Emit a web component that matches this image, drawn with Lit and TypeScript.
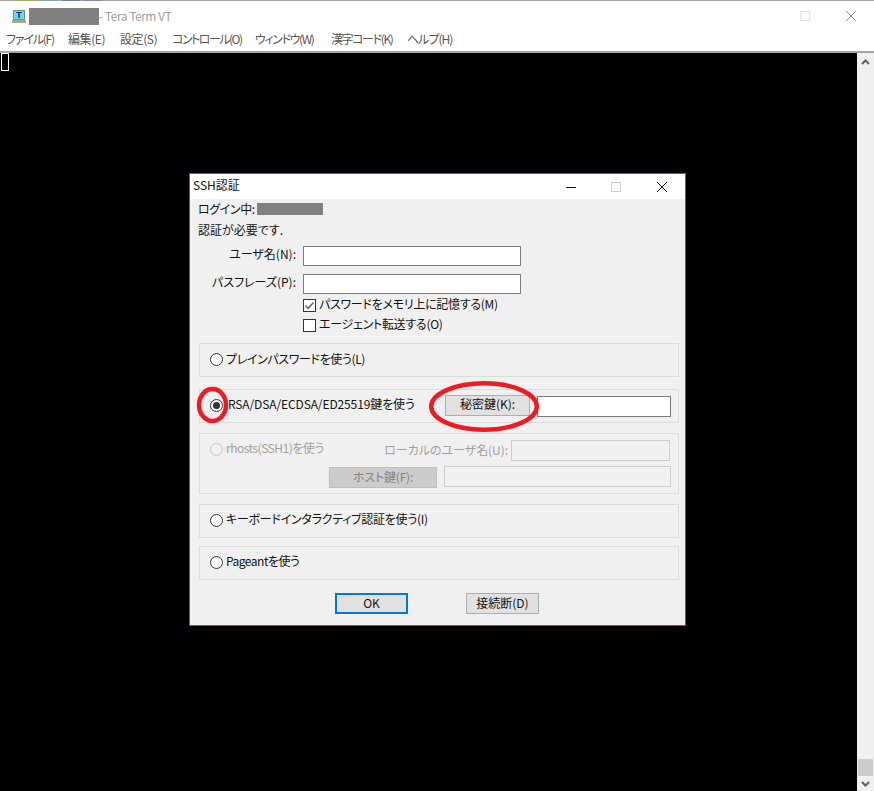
import { LitElement, html, css, svg } from "lit";
import { customElement } from "lit/decorators.js";

@customElement("app-root")
export class AppRoot extends LitElement {
  static styles = css`
    :host {
      display: block;
      position: relative;
      width: 874px;
      height: 791px;
      overflow: hidden;
      background: #000;
      font-family: "Noto Sans CJK JP", "Noto Sans", sans-serif;
      font-size: 12px;
      font-feature-settings: "palt";
      color: #111;
    }
    .tx { display: block; line-height: 16px; margin-bottom: 4px; white-space: nowrap; }
    .tx1 { display: block; line-height: 16px; margin-bottom: 2px; white-space: nowrap; }
    .tx0 { display: block; line-height: 16px; white-space: nowrap; }
    .win { display: flex; flex-direction: column; height: 100%; }
    .strip {
      height: 1px;
      background: linear-gradient(90deg,
        #a3a29b 0 17px, #9fae4a 17px 35px, #a3a29b 35px 40px, #7fa6a8 40px 58px,
        #a3a29b 58px 62px, #6f86a0 62px 80px, #a3a29b 80px 83px, #8d86a6 83px 102px, #a3a29b 102px);
    }
    .title { height: 30px; background: #fff; display: flex; align-items: center; padding-left: 12px; }
    .appicon { width: 14px; height: 15px; margin-right: 3px; }
    .mask { background: #808080; display: block; }
    .mask.t { width: 70px; height: 17px; }
    .apptitle { color: #9b9b9b; font-size: 11.5px; letter-spacing: -0.25px; white-space: pre; }
    .wctl { margin-left: auto; display: flex; align-items: center; gap: 36px; padding-right: 18px; }
    .menu { height: 20px; background: #fff; display: flex; align-items: center; padding-left: 6px; color: #555; }
    .menu .m1 { width: 62px; letter-spacing: -1.2px; }
    .menu .m2 { width: 52px; letter-spacing: -0.4px; }
    .menu .m4 { width: 83px; letter-spacing: -1.5px; }
    .menu .m5 { width: 76px; letter-spacing: -1.4px; }
    .menu .m6 { width: 76px; letter-spacing: -1.4px; }
    .menu .m7 { letter-spacing: -1px; }
    .rule { height: 2px; background: #a5a5a5; flex: none; }
    .main { flex: 1; display: flex; min-height: 0; }
    .term { flex: 1; background: #000; padding: 0 0 0 1px; }
    .cursor { width: 8px; height: 18px; border: 1px solid #fff; box-sizing: border-box; }
    .sb { width: 17px; background: #f0f0f0; display: flex; flex-direction: column; align-items: center; }
    .sb svg { flex: none; }
    .sb .arrowup { margin-top: 6px; }
    .sb .fill { flex: 1; }
    .sb .thumb { width: 15px; height: 17px; background: #cdcdcd; }
    .sb .arrowdn { margin: 5px 0 4px; }

    .dlg {
      position: absolute;
      left: 189px;
      top: 173px;
      width: 497px;
      height: 453px;
      box-sizing: border-box;
      border: 1px solid #0078d7;
      background: #f0f0f0;
      display: flex;
      flex-direction: column;
    }
    .dtitle { height: 25px; background: #fff; display: flex; align-items: center; padding-left: 3px; color: #111; flex: none; }
    .dctl { margin-left: auto; display: flex; align-items: center; gap: 35px; padding-right: 18px; }
    .dctl .cl { margin-left: 1px; }
    .dbody { display: flex; flex-direction: column; padding: 0 6px 0 8px; }
    .line { height: 20px; display: flex; align-items: center; }
    .line + .line { margin-top: 2px; }
    .login { letter-spacing: -0.4px; }
    .mask.h { width: 66px; height: 12px; margin-left: 2px; }
    .form {
      display: grid;
      grid-template-columns: 98px 218px;
      column-gap: 7px;
      grid-auto-rows: 20px;
      row-gap: 8px;
      margin-top: 5px;
      align-items: center;
    }
    .form label { display: flex; justify-content: flex-end; }
    .input { box-sizing: border-box; height: 20px; background: #fff; border: 1px solid #7a7a7a; display: block; }
    .checks { display: flex; flex-direction: column; margin-left: 105px; margin-top: 2px; }
    .check { height: 20px; display: flex; align-items: center; gap: 3px; letter-spacing: -0.28px; }
    .box { width: 13px; height: 13px; flex: none; display: block; margin-bottom: 1px; }
    .groups { display: flex; flex-direction: column; margin-top: 7px; margin-left: 1px; }
    .group { box-sizing: border-box; border: 1px solid #dcdcdc; padding: 0 7px 0 10px; }
    .row { display: flex; align-items: center; }
    .g1 { height: 34px; letter-spacing: -0.37px; }
    .g2 { height: 34px; margin-top: 12px; }
    .g2 .rt { letter-spacing: -0.12px; }
    .g3 { height: 61px; margin-top: 10px; padding-top: 6px; }
    .g4 { height: 34px; margin-top: 10px; letter-spacing: -0.27px; }
    .g5 { height: 34px; margin-top: 8px; letter-spacing: -0.5px; }
    .g1, .g2, .g4, .g5 { display: flex; align-items: center; }
    .radio { width: 13px; height: 13px; flex: none; margin: 0 3px 1px 0; display: block; }
    .g2 .radio { margin-right: 5px; }
    .keybtn { margin-left: auto; width: 85px; margin-bottom: 1px; }
    .keyinput { width: 134px; height: 21px; margin-left: 7px; margin-top: 1px; }
    .btn {
      box-sizing: border-box;
      height: 21px;
      background: #e1e1e1;
      border: 1px solid #adadad;
      display: flex;
      align-items: center;
      justify-content: center;
      color: #111;
      flex: none;
    }
    .dis { color: #a0a0a0; }
    .r1 { height: 21px; }
    .r1 .radio { margin-top: -3px; margin-bottom: 0; }
    .r1 .rl { margin-top: -3px; letter-spacing: -0.5px; }
    .r1 .loc { margin-left: auto; margin-right: 3px; letter-spacing: -0.05px; }
    .disinput { box-sizing: border-box; display: block; background: #f0f0f0; border: 1px solid #cccccc; height: 21px; }
    .r1 .disinput { width: 159px; margin-right: 1px; }
    .r2 { justify-content: flex-end; margin-top: 5px; align-items: flex-start; }
    .hostbtn { width: 108px; background: #cccccc; border-color: #bfbfbf; color: #838383; margin-top: 1px; letter-spacing: -0.2px; }
    .r2 .disinput { width: 227px; margin-left: 7px; }
    .actions { display: flex; margin-top: 13px; padding-left: 137px; gap: 58px; }
    .actions .btn { width: 73px; }
    .ok { border: 2px solid #0078d7; }
    .marks { position: absolute; left: 0; top: 0; pointer-events: none; }
  `;

  private radio(state: "on" | "off" | "dis") {
    const stroke = state === "dis" ? "#c6c6c6" : "#333";
    return html`<svg class="radio" viewBox="0 0 13 13">
      <circle cx="6.5" cy="6.5" r="6" fill=${state === "dis" ? "#f0f0f0" : "#fff"} stroke=${stroke}></circle>
      ${state === "on" ? svg`<circle cx="6.5" cy="6.5" r="3.5" fill="#333"></circle>` : ""}
    </svg>`;
  }

  private box(checked: boolean) {
    return html`<svg class="box" viewBox="0 0 13 13">
      <rect x=".5" y=".5" width="12" height="12" fill="#fff" stroke="#333"></rect>
      ${checked ? svg`<path d="M2.5 6.5 5.2 9.3 10.5 3.6" fill="none" stroke="#666" stroke-width="1.5"></path>` : ""}
    </svg>`;
  }

  render() {
    return html`
      <div class="win">
        <div class="strip"></div>
        <div class="title">
          <svg class="appicon" viewBox="0 0 14 15">
            <rect x="1" y="1" width="12" height="10" fill="#6f9a5f"></rect>
            <rect x="2" y="2" width="10" height="8" fill="#66e0dc"></rect>
            <text x="7" y="9" text-anchor="middle" font-family="Liberation Sans" font-size="9" font-weight="700" fill="#0000ee">T</text>
            <rect x="0" y="11" width="14" height="3" fill="#a8a89a"></rect>
          </svg>
          <span class="mask t"></span>
          <span class="apptitle">- Tera Term VT</span>
          <div class="wctl">
            <svg width="10" height="10" viewBox="0 0 10 10"><rect x=".5" y=".5" width="9" height="9" fill="none" stroke="#e3e3e3"></rect></svg>
            <svg width="10" height="10" viewBox="0 0 10 10"><path d="M0 0 10 10M10 0 0 10" stroke="#8a8a8a" fill="none"></path></svg>
          </div>
        </div>
        <div class="menu">
          <span class="tx m1">ファイル(F)</span>
          <span class="tx m2">編集(E)</span>
          <span class="tx m2">設定(S)</span>
          <span class="tx m4">コントロール(O)</span>
          <span class="tx m5">ウィンドウ(W)</span>
          <span class="tx m6">漢字コード(K)</span>
          <span class="tx m7">ヘルプ(H)</span>
        </div>
        <div class="rule"></div>
        <div class="main">
          <div class="term"><div class="cursor"></div></div>
          <div class="sb">
            <svg class="arrowup" width="9" height="6" viewBox="0 0 9 6"><path d="M1 5 4.5 1.5 8 5" fill="none" stroke="#606060" stroke-width="2"></path></svg>
            <div class="fill"></div>
            <div class="thumb"></div>
            <svg class="arrowdn" width="9" height="6" viewBox="0 0 9 6"><path d="M1 1 4.5 4.5 8 1" fill="none" stroke="#606060" stroke-width="2"></path></svg>
          </div>
        </div>
      </div>

      <div class="dlg">
        <div class="dtitle">
          <span class="tx">SSH認証</span>
          <div class="dctl">
            <svg width="10" height="10" viewBox="0 0 10 10"><path d="M0 5.5H10" stroke="#111"></path></svg>
            <svg width="10" height="10" viewBox="0 0 10 10"><rect x=".5" y=".5" width="9" height="9" fill="none" stroke="#ccc"></rect></svg>
            <svg class="cl" width="10" height="10" viewBox="0 0 10 10"><path d="M0 0 10 10M10 0 0 10" stroke="#111" fill="none"></path></svg>
          </div>
        </div>
        <div class="dbody">
          <div class="line"><span class="tx0 login">ログイン中:</span><span class="mask h"></span></div>
          <div class="line"><span class="tx1">認証が必要です.</span></div>
          <div class="form">
            <label><span class="tx">ユーザ名(N):</span></label><span class="input"></span>
            <label><span class="tx">パスフレーズ(P):</span></label><span class="input"></span>
          </div>
          <div class="checks">
            <div class="check">${this.box(true)}<span class="tx">パスワードをメモリ上に記憶する(M)</span></div>
            <div class="check">${this.box(false)}<span class="tx">エージェント転送する(O)</span></div>
          </div>
          <div class="groups">
            <div class="group g1">${this.radio("off")}<span class="tx1">プレインパスワードを使う(L)</span></div>
            <div class="group g2">
              ${this.radio("on")}<span class="tx rt">RSA/DSA/ECDSA/ED25519鍵を使う</span>
              <div class="btn keybtn"><span class="tx">秘密鍵(K):</span></div>
              <span class="input keyinput"></span>
            </div>
            <div class="group g3">
              <div class="row r1">
                ${this.radio("dis")}<span class="rl tx1 dis">rhosts(SSH1)を使う</span>
                <span class="loc tx1 dis">ローカルのユーザ名(U):</span>
                <span class="disinput"></span>
              </div>
              <div class="row r2">
                <div class="btn hostbtn"><span class="tx1">ホスト鍵(F):</span></div>
                <span class="disinput"></span>
              </div>
            </div>
            <div class="group g4">${this.radio("off")}<span class="tx">キーボードインタラクティブ認証を使う(I)</span></div>
            <div class="group g5">${this.radio("off")}<span class="tx">Pageantを使う</span></div>
          </div>
          <div class="actions">
            <div class="btn ok"><span class="tx1">OK</span></div>
            <div class="btn"><span class="tx1">接続断(D)</span></div>
          </div>
        </div>
      </div>

      <svg class="marks" width="874" height="791" viewBox="0 0 874 791">
        <ellipse cx="212.5" cy="405" rx="13.5" ry="16" fill="none" stroke="#ed1c24" stroke-width="4.5"></ellipse>
        <ellipse cx="484" cy="406.5" rx="52.8" ry="23.2" fill="none" stroke="#ed1c24" stroke-width="4.5"></ellipse>
      </svg>
    `;
  }
}
